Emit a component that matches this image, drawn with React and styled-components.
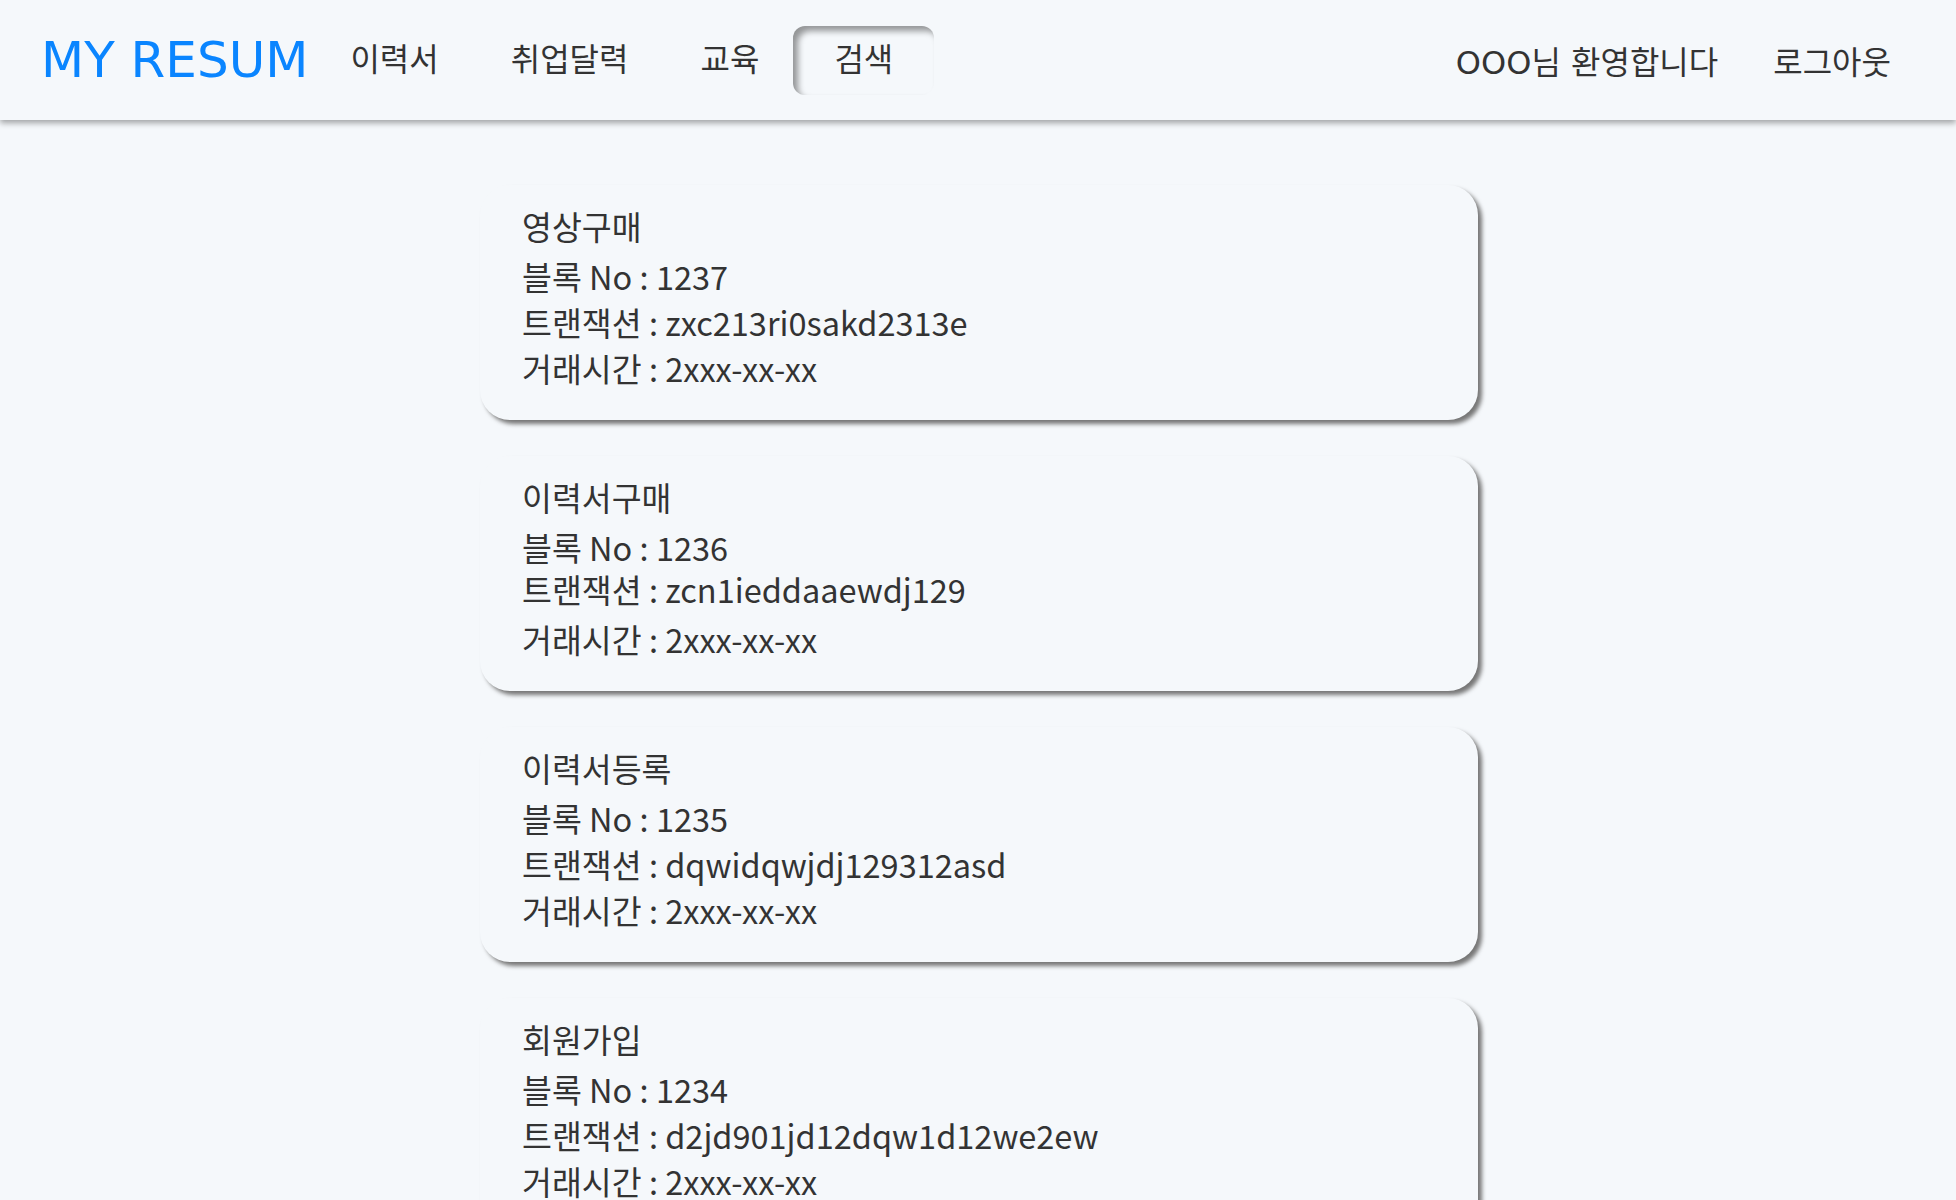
import React from 'react';
import styled, { createGlobalStyle, css } from 'styled-components';

const GlobalStyle = createGlobalStyle`
  body {
    margin: 0;
    background: #f5f8fb;
    color: #333;
    font-family: 'DejaVu Sans', 'Noto Sans CJK KR', sans-serif;
  }
`;

const Header = styled.header`
  height: 120px;
  display: flex;
  align-items: center;
  padding: 0 65px 0 41px;
  background: #f5f8fb;
  box-shadow: 0 3px 6px rgba(0, 0, 0, 0.35);
`;

const Logo = styled.div`
  color: #0a85ff;
  font-size: 50px;
  white-space: nowrap;
`;

const Nav = styled.nav`
  display: flex;
  margin-left: 6px;
`;

const NavItem = styled.div`
  height: 69px;
  line-height: 69px;
  padding: 0 36px;
  font-size: 32px;
  border-radius: 12px;
  cursor: pointer;

  ${(p) =>
    p.$active &&
    css`
      padding: 0 41px;
      margin-left: -2px;
      box-shadow: inset 5px 5px 6px rgba(0, 0, 0, 0.4);
    `}
`;

const UserArea = styled.div`
  margin-left: auto;
  display: flex;
  gap: 55px;
  font-size: 32px;
`;

const Main = styled.main`
  display: flex;
  flex-direction: column;
  align-items: center;
  gap: 36px;
  padding-top: 65px;
`;

const Card = styled.div`
  width: 998px;
  height: 235px;
  box-sizing: border-box;
  padding: 18px 45px 19px 42px;
  margin-left: 2px;
  border-radius: 30px;
  background: #f5f8fb;
  box-shadow: 4px 4px 4px #777;
  font-family: 'Noto Sans CJK KR', sans-serif;
  font-size: 32.5px;
`;

const Kind = styled.div`
  line-height: 46px;
  margin-bottom: 4px;
`;

const Line = styled.div`
  line-height: 46px;
  ${(p) =>
    p.$raise &&
    css`
      line-height: 37px;
      margin-bottom: 9px;
    `}
`;

const blocks = [
  { kind: '영상구매', no: 1237, tx: 'zxc213ri0sakd2313e' },
  { kind: '이력서구매', no: 1236, tx: 'zcn1ieddaaewdj129', raise: true },
  { kind: '이력서등록', no: 1235, tx: 'dqwidqwjdj129312asd' },
  { kind: '회원가입', no: 1234, tx: 'd2jd901jd12dqw1d12we2ew' },
];

export default function App() {
  return (
    <>
      <GlobalStyle />
      <Header>
        <Logo>MY RESUM</Logo>
        <Nav>
          <NavItem>이력서</NavItem>
          <NavItem>취업달력</NavItem>
          <NavItem>교육</NavItem>
          <NavItem $active>검색</NavItem>
        </Nav>
        <UserArea>
          <div>OOO님 환영합니다</div>
          <div>로그아웃</div>
        </UserArea>
      </Header>
      <Main>
        {blocks.map((b) => (
          <Card key={b.no}>
            <Kind>{b.kind}</Kind>
            <Line>블록 No : {b.no}</Line>
            <Line $raise={b.raise}>트랜잭션 : {b.tx}</Line>
            <Line>거래시간 : 2xxx-xx-xx</Line>
          </Card>
        ))}
      </Main>
    </>
  );
}
